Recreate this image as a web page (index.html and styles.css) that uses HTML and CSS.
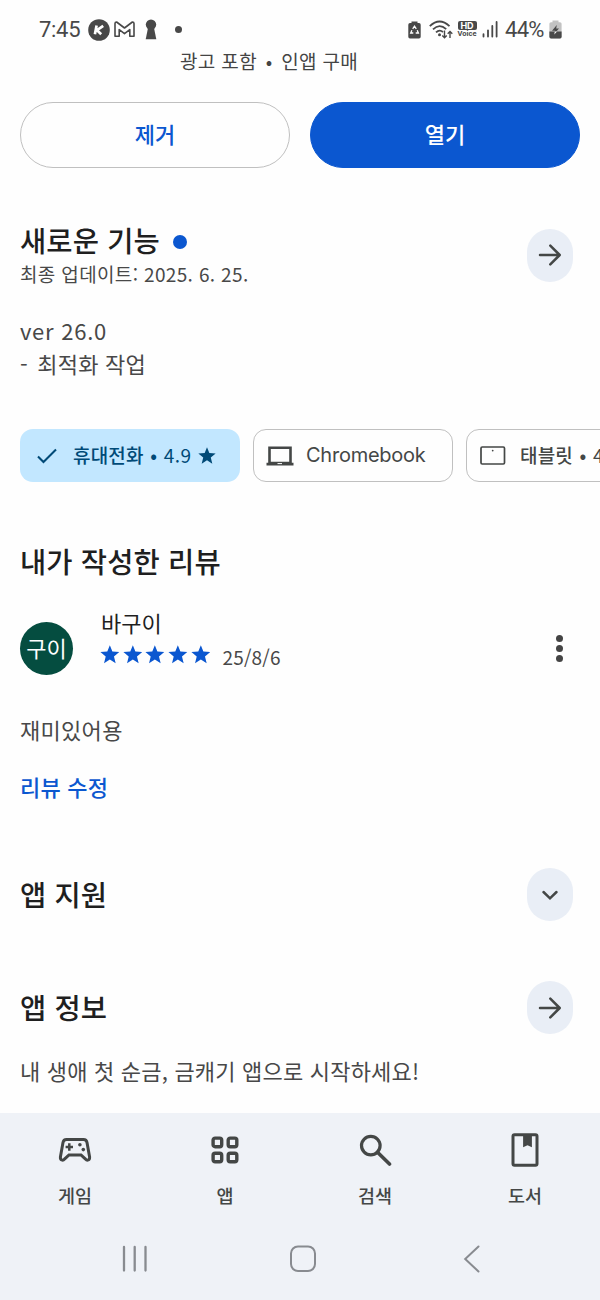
FILE: index.html
```html
<!DOCTYPE html>
<html lang="ko">
<head>
<meta charset="utf-8">
<title>앱 상세</title>
<link rel="stylesheet" href="styles.css">
</head>
<body>
<svg class="defs" width="0" height="0">
  <symbol id="star" viewBox="0 0 20 20"><path d="M10 0.300l2.600 6.400 7 .5-5.400 4.500 1.700 6.800-5.900-3.700-5.900 3.700 1.700-6.800L.4 7.200l7-.5z"/></symbol>
  <symbol id="arrow" viewBox="0 0 24 24"><path d="M2 12H21.5M12.3 2.600 21.700 12 12.300 21.400" fill="none" stroke="currentColor" stroke-width="2.500" stroke-linecap="round" stroke-linejoin="round"/></symbol>
</svg>
<div class="screen">
  <header class="status">
    <div class="status-left">
      <span class="clock">7:45</span>
      <svg class="ic-k" width="22" height="22" viewBox="0 0 22 22"><circle cx="11" cy="11" r="10.800" fill="#484848"/><path d="M8.600 6.600 6.900 15.200M15.200 6.800 9 11.200 13.200 15.200" fill="none" stroke="#fff" stroke-width="2.700"/></svg>
      <svg class="ic-m" width="21" height="17" viewBox="0 0 21 17"><path d="M1 15.200V2.600Q1 1 2.600 1L10.500 7 18.400 1Q20 1 20 2.600V15.200H15.800V8.600L10.500 12.600 5.200 8.600V15.200Z" fill="none" stroke="#484848" stroke-width="1.600" stroke-linejoin="round"/></svg>
      <svg class="ic-key" width="12" height="21" viewBox="0 0 12 21"><circle cx="6" cy="5.600" r="5.200" fill="#484848"/><path d="M3.200 8h5.600L11.300 20.300H.7z" fill="#484848"/></svg>
      <span class="dot-more"></span>
    </div>
    <div class="status-right">
      <svg class="ic-care" width="13" height="18" viewBox="0 0 13 18"><path d="M3.500 2V.5h6V2H11q1.700 0 1.700 1.700v12q0 1.700-1.700 1.700H2Q.3 17.400.3 15.700v-12Q.3 2 2 2z" fill="#484848"/><path d="M4.700 7.800 6.500 5.200 8.300 7.800M9.200 9.300l1.200 2.700H7.700M5.300 12H2.700L3.900 9.300" fill="none" stroke="#fff" stroke-width="1.300"/></svg>
      <svg class="ic-wifi" width="24" height="20" viewBox="0 0 24 20"><g fill="none" stroke="#484848" stroke-width="1.800"><path d="M.8 6.200Q10.500-3.200 20.500 6.200M4 9.400Q10.500 3 17.200 9.200M7 12.400Q10.500 9 14 12"/></g><circle cx="10.500" cy="14.800" r="1.500" fill="#484848"/><path d="M15.500 10.500v7M13.300 15.500l2.200 2.300 2.200-2.300M21 18v-6.300M18.700 13.700l2.300-2.300 2.300 2.300" fill="none" stroke="#484848" stroke-width="1.400"/></svg>
      <span class="hd"><b>HD</b><i>Voice</i></span>
      <svg class="ic-sig" width="16" height="17" viewBox="0 0 16 17"><path d="M1.500 13.200v2.300M6 9.300v6.200M10.300 5v10.500M14.600 1v14.500" stroke="#484848" stroke-width="1.800" stroke-linecap="round"/></svg>
      <span class="pct">44%</span>
      <svg class="ic-bat" width="13" height="19" viewBox="0 0 13 19"><path d="M3.500 2.200V.6h6v1.600H11q1.600 0 1.600 1.600v13q0 1.600-1.600 1.600H2Q.4 18.400.4 16.800v-13q0-1.600 1.600-1.600z" fill="#c2c2c2"/><path d="M.4 11.600h12.200v5.200q0 1.600-1.600 1.600H2Q.4 18.400.4 16.800z" fill="#484848"/><path d="M7.800 5 3 10.800h3l-.6 3 4.600-5.200H7.200z" fill="#484848"/><path d="M5.800 11.600h2.200L5.300 14.500z" fill="#fff"/></svg>
    </div>
  </header>

  <p class="ads">광고 포함 <span>•</span> 인앱 구매</p>

  <div class="actions">
    <button class="btn btn-outline">제거</button>
    <button class="btn btn-fill">열기</button>
  </div>

  <section class="row whats-new">
    <div>
      <h2><span>새로운 기능</span><i class="new-dot"></i></h2>
      <p class="updated">최종 업데이트: <span>2025. 6. 25.</span></p>
    </div>
    <span class="round"><svg width="24" height="24"><use href="#arrow"/></svg></span>
  </section>
  <div class="notes"><p class="ver">ver 26.0</p><p><span class="dash">-</span> 최적화 작업</p></div>

  <div class="chips">
    <div class="chip chip-on">
      <svg width="20" height="16" viewBox="0 0 20 16"><path d="M1 8.500 6.500 14 19 1.500" fill="none" stroke="currentColor" stroke-width="2.100"/></svg>
      <span class="chip-t">휴대전화 <em>•</em> <b>4.9</b></span>
      <svg class="chip-star" width="18" height="18"><use href="#star"/></svg>
    </div>
    <div class="chip chip-cb">
      <svg width="28" height="20" viewBox="0 0 28 20"><path d="M2.200 0.500h23.600V16.800H27.500V19.500H.5V16.800H2.200zM4.800 3.100v12.700h18.400V3.100z" fill="currentColor" fill-rule="evenodd"/><path d="M11.500 17.600h4.500" stroke="#fff" stroke-width="1"/></svg>
      <span class="latin">Chromebook</span>
    </div>
    <div class="chip chip-tab">
      <svg width="26" height="19" viewBox="0 0 26 19"><rect x="1" y="1" width="23.500" height="17" rx="1.200" fill="none" stroke="currentColor" stroke-width="1.700"/><circle cx="12.700" cy="4.600" r=".9" fill="currentColor"/></svg>
      <span class="chip-t">태블릿 <em>•</em> <b>4</b></span>
    </div>
  </div>

  <h2 class="my-review">내가 작성한 리뷰</h2>
  <div class="reviewer">
    <div class="avatar">구이</div>
    <div class="who">
      <p class="name">바구이</p>
      <div class="stars">
        <svg><use href="#star"/></svg><svg><use href="#star"/></svg><svg><use href="#star"/></svg><svg><use href="#star"/></svg><svg><use href="#star"/></svg>
        <span class="date">25/8/6</span>
      </div>
    </div>
    <div class="kebab"><i></i><i></i><i></i></div>
  </div>
  <p class="review-text">재미있어용</p>
  <p class="edit">리뷰 수정</p>

  <section class="row support">
    <h2>앱 지원</h2>
    <span class="round"><svg width="24" height="24" viewBox="0 0 24 24"><path d="M5.500 9 12 15.300 18.500 9" fill="none" stroke="currentColor" stroke-width="2.500" stroke-linecap="round"/></svg></span>
  </section>
  <section class="row info">
    <h2>앱 정보</h2>
    <span class="round"><svg width="24" height="24"><use href="#arrow"/></svg></span>
  </section>
  <p class="desc">내 생애 첫 순금, 금캐기 앱으로 시작하세요!</p>

  <footer class="bottom">
    <nav class="tabs">
      <div class="tab"><svg width="34" height="34" viewBox="0 0 34 34" stroke="currentColor" stroke-width="3"><path d="M8.500 6.400h17q3 0 3.500 3L31.600 24q.3 2.700-1.800 3.100-1.300.2-2.300-1L23 22H11l-4.500 4.100q-1 1.200-2.300 1-2.100-.4-1.800-3.100L5 9.400q.5-3 3.500-3z"/><path d="M11.300 10.300v7.400M7.600 14h7.400" stroke-width="2.500"/><g fill="currentColor" stroke="none"><circle cx="21.900" cy="11.800" r="1.800"/><circle cx="25.300" cy="16.600" r="1.800"/></g></svg><span>게임</span></div>
      <div class="tab"><svg width="34" height="34" viewBox="0 0 34 34" stroke="currentColor" stroke-width="3.400"><rect x="5.100" y="5.100" width="8.600" height="8.600" rx="2"/><rect x="20.200" y="5.100" width="8.600" height="8.600" rx="2"/><rect x="5.100" y="20.200" width="8.600" height="8.600" rx="2"/><rect x="20.200" y="20.200" width="8.600" height="8.600" rx="2"/></svg><span>앱</span></div>
      <div class="tab"><svg width="34" height="34" viewBox="0 0 34 34" stroke="currentColor" stroke-width="3.200"><circle cx="12.800" cy="12.600" r="9.300"/><path d="M19.500 19.200 31.500 31" stroke-width="3.600" stroke-linecap="round"/></svg><span>검색</span></div>
      <div class="tab"><svg width="34" height="34" viewBox="0 0 34 34" stroke="currentColor" stroke-width="3"><rect x="5" y="1.700" width="24" height="30.600" rx="1.500"/><path d="M15.100 2h8.800v12.200l-4.400-1.900-4.400 1.900z" fill="currentColor" stroke="none"/></svg><span>도서</span></div>
    </nav>
    <div class="sys">
      <svg width="26" height="28" viewBox="0 0 26 28"><path d="M2 2v23.500M12.700 2v23.500M23.500 2v23.500" stroke="#888b90" stroke-width="2.300" stroke-linecap="round"/></svg>
      <svg class="home" width="28" height="28" viewBox="0 0 28 28"><rect x="2" y="1.500" width="24" height="24.500" rx="7" fill="none" stroke="#888b90" stroke-width="2"/></svg>
      <svg width="18" height="28" viewBox="0 0 18 28"><path d="M15.500 1.500 2.200 14l13.300 12.500" fill="none" stroke="#888b90" stroke-width="2" stroke-linecap="round"/></svg>
    </div>
  </footer>
</div>
</body>
</html>
```
FILE: styles.css
```css
* { box-sizing: border-box; margin: 0; padding: 0; }
body { background: #fefefe; font-family: "Noto Sans CJK KR", sans-serif; color: #484848; }
em, i { font-style: normal; }
svg { display: block; flex: none; fill: currentColor; }
.defs { position: absolute; }
.screen { width: 600px; height: 1300px; overflow: hidden; display: flex; flex-direction: column; white-space: nowrap; }
.screen > * { flex: none; }

.status { height: 47px; padding: 0 38px 0 39px; display: flex; justify-content: space-between; }
.status-left, .status-right { display: flex; align-items: center; padding-top: 12px; }
.clock, .pct { font: 400 22px/26px Roboto, sans-serif; color: #484848; }
.clock { width: 49px; letter-spacing: -.3px; }
.ic-m { margin-left: 4px; }
.ic-key { margin-left: 10px; }
.dot-more { width: 7px; height: 7px; border-radius: 50%; background: #484848; margin-left: 18px; }
.ic-wifi { margin-left: 8px; }
.hd { width: 20px; margin-left: 4px; display: flex; flex-direction: column; align-items: center; }
.hd b { width: 19px; height: 9px; border-radius: 2px; background: #484848; color: #fff; font: 700 9px/9px Inter, sans-serif; text-align: center; }
.hd i { font: 700 7.500px/8px Roboto, sans-serif; }
.ic-sig { margin-left: 5px; }
.pct { width: 43px; margin-left: 7px; letter-spacing: -.7px; }
.ic-bat { margin-left: 1px; }

.ads { height: 30px; line-height: 28px; padding-left: 180px; font-size: 19px; color: #444; letter-spacing: .35px; }
.ads span { margin: 0 3px; }
.actions { margin-top: 25px; padding: 0 20px; height: 66px; display: flex; gap: 20px; }
.btn { width: 270px; border-radius: 33px; border: 1.500px solid #c0c0c0; font: 500 22px/58px "Noto Sans CJK KR", sans-serif; padding-bottom: 4px; }
.btn-outline { background: #fefefe; color: #0b57d0; }
.btn-fill { background: #0b57d0; border-color: #0b57d0; color: #fff; }

.row { display: flex; justify-content: space-between; align-items: center; padding: 0 27px 0 20px; }
h2 { font-size: 28.500px; line-height: 38px; padding-bottom: 2px; font-weight: 500; color: #1f1f1f; display: flex; align-items: center; letter-spacing: .15px; }
.round { width: 46px; height: 53px; border-radius: 23px; background: #e9eef6; color: #444746; display: flex; align-items: center; justify-content: center; }
.whats-new { margin-top: 52px; height: 70px; }
.new-dot { width: 14px; height: 14px; border-radius: 50%; background: #0b57d0; margin: 3px 0 0 13px; }
.updated { font-size: 19px; line-height: 26px; padding-bottom: 2px; color: #484848; letter-spacing: .35px; }
.notes { margin-top: 24px; padding-left: 20px; font-size: 22px; line-height: 33px; height: 70px; letter-spacing: .2px; }
.ver { letter-spacing: .75px; }
.dash { display: inline-block; width: 10px; margin-right: 1px; }

.chips { margin-top: 45px; padding-left: 20px; display: flex; gap: 13px; height: 53px; }
.chip { height: 53px; border: 1.500px solid #c0c0c0; border-radius: 13px; display: flex; align-items: center; flex: none; font-size: 19px; font-weight: 500; color: #444746; }
.chip b { font-weight: 400; letter-spacing: .5px; }
.chip em { margin: 0 1px; }
.chip-t { padding-bottom: 3px; letter-spacing: .2px; }
.chip-on { width: 220px; padding-left: 17px; background: #c2e7ff; border: 0; color: #004a77; }
.chip-on .chip-t { margin-left: 16px; }
.chip-star { margin: 1px 0 0 6px; }
.chip-cb { width: 200px; padding-left: 12px; }
.latin { margin: 0 0 1px 12px; font: 400 20px/28px Inter, sans-serif; letter-spacing: -.25px; }
.chip-tab { width: 200px; padding-left: 13px; }
.chip-tab .chip-t { margin-left: 14px; }

.my-review { margin-top: 60px; padding-left: 20px; letter-spacing: .15px; }
.reviewer { margin-top: 25px; padding: 0 36px 0 20px; height: 71px; display: flex; }
.avatar { width: 53px; height: 53px; margin-top: 15px; border-radius: 50%; background: #054d40; color: #fff; font-size: 22px; line-height: 50px; text-align: center; }
.who { margin-left: 27px; flex: 1; }
.name { font-size: 22px; line-height: 30px; padding-bottom: 2px; padding-left: 1px; color: #1f1f1f; }
.stars { display: flex; align-items: center; gap: 3px; color: #0b57d0; height: 31px; }
.stars svg { width: 19.700px; height: 19.700px; }
.date { margin-left: 9px; padding-top: 5px; color: #484848; font: 400 19px/26px "Noto Sans CJK KR", sans-serif; letter-spacing: .2px; }
.kebab { width: 8px; margin-top: 28px; display: flex; flex-direction: column; gap: 3px; }
.kebab i { width: 7px; height: 7px; border-radius: 50%; background: #444; }
.review-text { margin-top: 35px; padding-left: 20px; font-size: 22px; line-height: 33px; letter-spacing: .3px; }
.edit { margin-top: 24px; padding-left: 20px; font-size: 22px; line-height: 33px; font-weight: 500; color: #0b57d0; letter-spacing: .2px; }
.support { margin-top: 65px; height: 53px; }
.info { margin-top: 60px; height: 53px; }
.desc { margin-top: 20px; padding-left: 20px; font-size: 22px; line-height: 33px; letter-spacing: .2px; }

.bottom { margin-top: auto; height: 187px; background: #eff2f7; }
.tabs { display: flex; height: 107px; padding-top: 20px; }
.tab { flex: 1; display: flex; flex-direction: column; align-items: center; gap: 14px; color: #444746; font-size: 18.500px; font-weight: 500; line-height: 28px; }
.tab svg { fill: none; }
.sys { display: flex; justify-content: space-between; padding: 25px 119px 0 122px; }
.home { margin-right: 5px; }
```
